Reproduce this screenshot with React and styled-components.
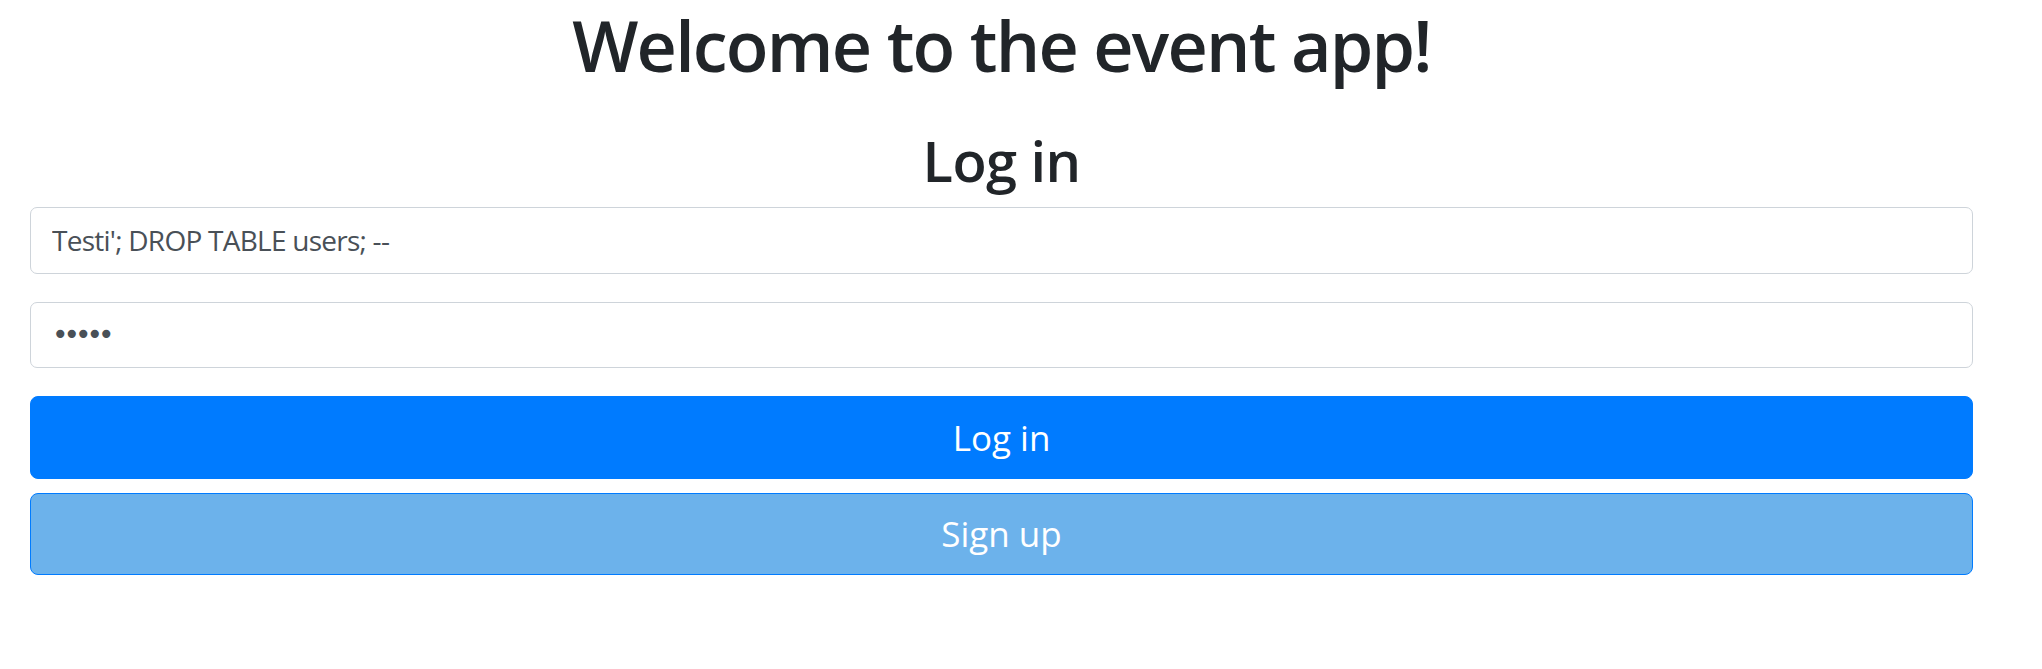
import React from "react";
import styled, { createGlobalStyle } from "styled-components";

const GlobalStyle = createGlobalStyle`
  html, body {
    margin: 0;
    padding: 0;
    background: #ffffff;
  }
  body {
    font-family: "Open Sans", "Noto Sans", sans-serif;
    color: #212529;
  }
  * {
    box-sizing: border-box;
  }
`;

const Page = styled.div`
  padding: 3px 69px 0 30px;
  display: flex;
  flex-flow: column;
`;

const Title = styled.h1`
  margin: 0 0 40px;
  font-size: 70px;
  line-height: 84px;
  font-weight: 600;
  letter-spacing: -1.8px;
  text-align: center;
  color: #212529;
`;

const SubTitle = styled.h2`
  margin: 0 0 13px;
  font-size: 56px;
  line-height: 67px;
  font-weight: 600;
  letter-spacing: -0.6px;
  text-align: center;
  color: #212529;
`;

const Form = styled.form`
  display: flex;
  flex-flow: column;
`;

const Field = styled.div`
  margin-bottom: 28px;
`;

const Input = styled.input`
  display: block;
  width: 100%;
  height: 66.5px;
  padding: 10px 21px;
  font-family: "Open Sans", "Noto Sans", sans-serif;
  font-size: 28px;
  line-height: 42px;
  letter-spacing: -0.75px;
  color: #495057;
  background: #ffffff;
  border: 1px solid #ced4da;
  border-radius: 7px;
  outline: none;

  &[type="password"] {
    font-family: "DejaVu Sans", sans-serif;
    letter-spacing: -5px;
  }
`;

const Button = styled.button`
  display: block;
  width: 100%;
  height: ${({ $tall }) => ($tall ? "83px" : "82px")};
  margin-bottom: 14px;
  padding: 0 28px;
  font-family: "Open Sans", "Noto Sans", sans-serif;
  font-size: 35px;
  line-height: 52px;
  color: #ffffff;
  background: ${({ $light }) => ($light ? "#6cb2eb" : "#007bff")};
  border: 1px solid #007bff;
  border-radius: 8px;
  cursor: pointer;
`;

const App = () => (
  <>
    <GlobalStyle />
    <Page>
      <Title>Welcome to the event app!</Title>
      <SubTitle>Log in</SubTitle>
      <Form onSubmit={(e) => e.preventDefault()}>
        <Field>
          <Input type="text" defaultValue="Testi'; DROP TABLE users; --" />
        </Field>
        <Field>
          <Input type="password" defaultValue="12345" />
        </Field>
        <Button type="submit" $tall>
          Log in
        </Button>
        <Button type="button" $light>
          Sign up
        </Button>
      </Form>
    </Page>
  </>
);

export default App;
